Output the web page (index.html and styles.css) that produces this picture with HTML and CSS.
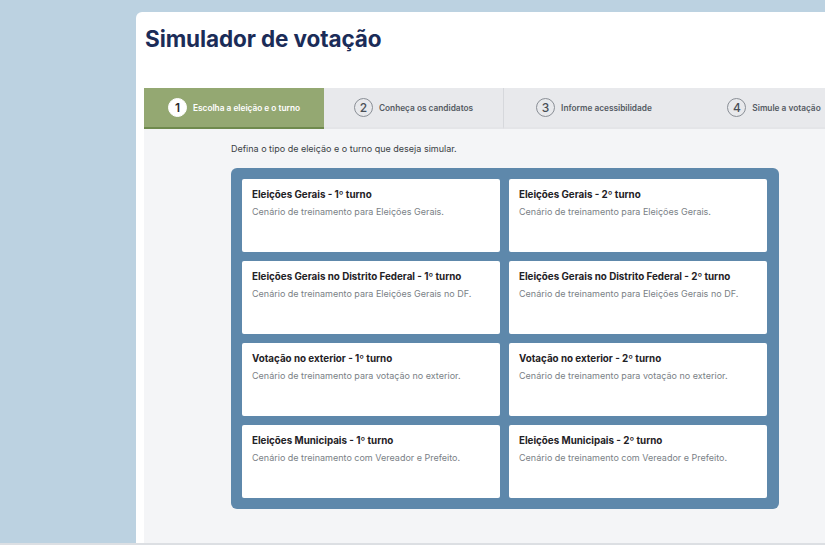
FILE: index.html
```html
<!DOCTYPE html>
<html lang="pt-BR">
<head>
<meta charset="utf-8">
<title>Simulador de votação</title>
<link rel="stylesheet" href="styles.css">
</head>
<body>
<div class="page">
  <div class="panel">
    <h1 class="title">Simulador de votação</h1>
    <div class="steps">
      <div class="step active"><span class="num">1</span><span class="label">Escolha a eleição e o turno</span></div>
      <div class="step divided"><span class="num">2</span><span class="label">Conheça os candidatos</span></div>
      <div class="step"><span class="num">3</span><span class="label">Informe acessibilidade</span></div>
      <div class="step"><span class="num">4</span><span class="label">Simule a votação</span></div>
    </div>
    <div class="content">
      <p class="intro">Defina o tipo de eleição e o turno que deseja simular.</p>
      <div class="options">
        <div class="card"><div class="card-title">Eleições Gerais - 1º turno</div><div class="card-desc">Cenário de treinamento para Eleições Gerais.</div></div>
        <div class="card"><div class="card-title">Eleições Gerais - 2º turno</div><div class="card-desc">Cenário de treinamento para Eleições Gerais.</div></div>
        <div class="card"><div class="card-title">Eleições Gerais no Distrito Federal - 1º turno</div><div class="card-desc">Cenário de treinamento para Eleições Gerais no DF.</div></div>
        <div class="card"><div class="card-title">Eleições Gerais no Distrito Federal - 2º turno</div><div class="card-desc">Cenário de treinamento para Eleições Gerais no DF.</div></div>
        <div class="card"><div class="card-title">Votação no exterior - 1º turno</div><div class="card-desc">Cenário de treinamento para votação no exterior.</div></div>
        <div class="card"><div class="card-title">Votação no exterior - 2º turno</div><div class="card-desc">Cenário de treinamento para votação no exterior.</div></div>
        <div class="card"><div class="card-title">Eleições Municipais - 1º turno</div><div class="card-desc">Cenário de treinamento com Vereador e Prefeito.</div></div>
        <div class="card"><div class="card-title">Eleições Municipais - 2º turno</div><div class="card-desc">Cenário de treinamento com Vereador e Prefeito.</div></div>
      </div>
    </div>
  </div>
</div>
<div class="bottom-line"></div>
</body>
</html>
```

FILE: styles.css
```css
html, body {
  margin: 0;
  padding: 0;
}
body {
  width: 825px;
  height: 545px;
  overflow: hidden;
  background: #bcd2e1;
  font-family: Inter, "Noto Sans", sans-serif;
  display: flex;
  flex-direction: column;
}
.page {
  padding: 12px 0 0 136px;
  height: 543px;
  box-sizing: border-box;
  display: flex;
  flex: none;
}
.panel {
  flex: 1;
  min-width: 0;
  background: #ffffff;
  border-top-left-radius: 6px;
  padding-left: 8px;
  display: flex;
  flex-direction: column;
  overflow: hidden;
}
.title {
  margin: 0;
  padding: 13px 0 0 1px;
  height: 76px;
  flex: none;
  box-sizing: border-box;
  font-size: 22.5px;
  font-weight: 700;
  color: #1b2c58;
  letter-spacing: -0.1px;
  line-height: 28px;
}
.steps {
  display: flex;
  height: 41px;
  flex: none;
  background: #e8e9ec;
  overflow: hidden;
}
.step {
  width: 180px;
  flex: none;
  display: flex;
  align-items: center;
  justify-content: center;
  gap: 6px;
  color: #555b63;
  font-size: 8.3px;
  font-weight: 600;
  border-bottom: 2px solid #e4e5e8;
  box-sizing: border-box;
}
.step.divided {
  border-right: 1px solid #d6d8dc;
}
.step.active {
  background: #94a872;
  color: #ffffff;
  border-bottom-color: #6f8a4d;
}
.num {
  width: 17px;
  height: 17px;
  border: 1.5px solid #8a8f96;
  border-radius: 50%;
  display: flex;
  align-items: center;
  justify-content: center;
  font-size: 12px;
  font-weight: 500;
  color: #4a4f57;
  flex: none;
}
.step.active .num {
  background: #ffffff;
  border-color: #ffffff;
  color: #2a2a2a;
  font-weight: 600;
}
.content {
  flex: 1;
  background: #f4f5f7;
  padding: 14px 0 0 87px;
}
.intro {
  margin: 0 0 13px 0;
  font-size: 9px;
  line-height: 12px;
  color: #3a3f45;
}
.options {
  width: 548px;
  box-sizing: border-box;
  background: #5e88ab;
  border-radius: 6px;
  padding: 11px;
  display: grid;
  grid-template-columns: 258px 258px;
  grid-auto-rows: 73px;
  column-gap: 9px;
  row-gap: 9px;
}
.card {
  background: #ffffff;
  border-radius: 2px;
  padding: 9px 10px;
  box-sizing: border-box;
}
.card-title {
  font-size: 9.8px;
  font-weight: 700;
  color: #1f2226;
  line-height: 13px;
}
.card-desc {
  margin-top: 5px;
  font-size: 9px;
  color: #7a7f86;
  line-height: 11px;
}
.bottom-line {
  height: 2px;
  background: #dcdfe3;
  flex: none;
}
```
